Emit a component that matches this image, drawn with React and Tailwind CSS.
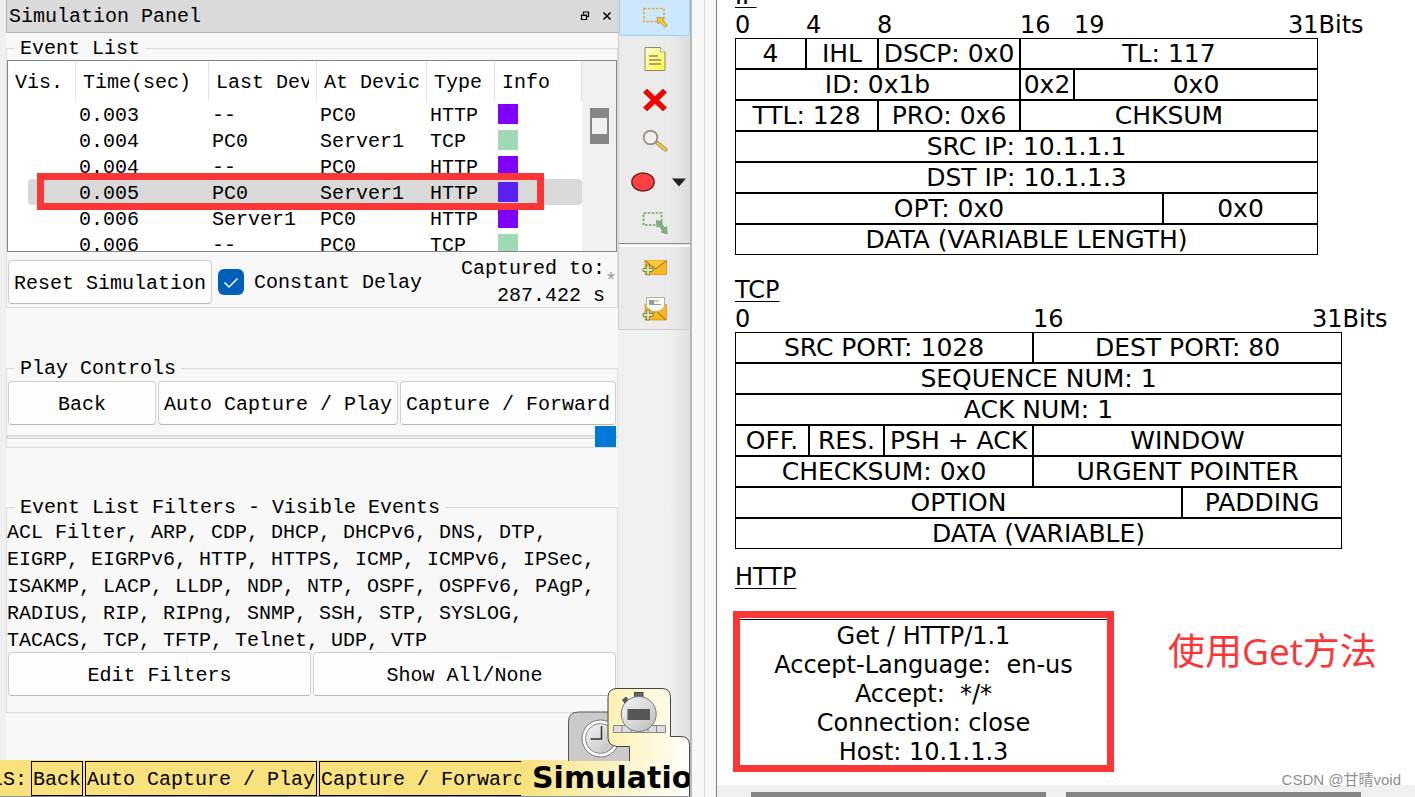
import React from "react";

const events = [
  ["0.003", "--", "PC0", "HTTP", "violet"],
  ["0.004", "PC0", "Server1", "TCP", "green"],
  ["0.004", "--", "PC0", "HTTP", "violet"],
  ["0.005", "PC0", "Server1", "HTTP", "selected"],
  ["0.006", "Server1", "PC0", "HTTP", "violet"],
  ["0.006", "--", "PC0", "TCP", "green"],
];

const swatches = {
  violet: "bg-[#8000ff]",
  green: "bg-[#a0dab5]",
  selected: "bg-[#5a22f2]",
};

const headers = ["Vis.", "Time(sec)", "Last Device", "At Device", "Type", "Info"];

function PanelButton({ className = "", children }) {
  return (
    <button
      type="button"
      className={`h-11 whitespace-nowrap rounded border border-[#cfcfcf] border-b-[#b9b9b9] bg-[#fdfdfd] pt-1 ${className}`}
    >
      {children}
    </button>
  );
}

function Group({ title, className = "", children }) {
  return (
    <fieldset className={`min-w-0 border border-[#dcdcdc] ${className}`}>
      <legend className="ml-2 h-6 px-[5px] leading-[26px]">{title}</legend>
      {children}
    </fieldset>
  );
}

function EventTable() {
  return (
    <div className="relative">
      <div className="flex h-48 overflow-hidden border border-[#828790] bg-white">
        <table className="w-[574px] shrink-0 table-fixed border-separate border-spacing-0 text-left">
          <colgroup>
            <col className="w-[68px]" />
            <col className="w-[133px]" />
            <col className="w-[108px]" />
            <col className="w-[110px]" />
            <col className="w-[68px]" />
            <col className="w-[87px]" />
          </colgroup>
          <thead>
            <tr className="h-10">
              {headers.map((h) => (
                <th key={h} className="border-r border-[#e2e2e2] px-[7px] pb-0 pt-1 font-normal">
                  <span className="block overflow-hidden whitespace-nowrap">{h}</span>
                </th>
              ))}
            </tr>
          </thead>
          <tbody>
            {events.map(([time, last, at, type, color], i) => {
              const sel = color === "selected" ? "bg-[#d9d9d9]" : "";
              return (
                <tr key={i} className="h-[26px] leading-[22px]">
                  <td className="p-0 pl-5">
                    <div className={`h-[26px] rounded-l ${sel}`} />
                  </td>
                  <td className={`pb-0 pl-[3px] pt-1 ${sel}`}>{time}</td>
                  <td className={`pb-0 pl-[3px] pt-1 ${sel}`}>{last}</td>
                  <td className={`pb-0 pl-[3px] pt-1 ${sel}`}>{at}</td>
                  <td className={`pb-0 pl-[3px] pt-1 ${sel}`}>{type}</td>
                  <td className={`rounded-r py-0 pl-[3px] ${sel}`}>
                    <div className={`size-5 ${swatches[color]}`} />
                  </td>
                </tr>
              );
            })}
          </tbody>
        </table>
        <div className="flex-1 bg-[#f0f0f0] pl-2 pt-[47px]">
          <div className="h-9 w-[19px] border-x-2 border-y-10 border-[#858585] bg-[#f0f0f0]" />
        </div>
      </div>
      <div className="absolute left-[30px] top-[113px] h-[37px] w-[507px] border-7 border-[#fc3636]" />
    </div>
  );
}

function SelectIcon() {
  return (
    <svg width="26" height="24" viewBox="0 0 26 24">
      <rect x="2" y="2.500" width="20" height="13" fill="none" stroke="#f5a32a" strokeWidth="1.600" strokeDasharray="2.600 1.400" />
      <path d="M15 11l7 1-1.500 2 5 5.200-2.600 2.200-4.900-5.100-2 1.700z" fill="#f3c62d" stroke="#a18a4a" strokeWidth=".7" />
    </svg>
  );
}

function NoteIcon() {
  return (
    <svg width="26" height="26" viewBox="0 0 26 26">
      <defs>
        <linearGradient id="note" x1="0" y1="0" x2="1" y2="1">
          <stop offset="0" stopColor="#fbfad2" />
          <stop offset="1" stopColor="#fdfb3c" />
        </linearGradient>
      </defs>
      <path d="M3 1.500h15.500L23 6v18.500H3z" fill="url(#note)" stroke="#8e8e62" />
      <path d="M18.500 1.500V6H23" fill="#fff" stroke="#a9a96f" />
      <path d="M7 10h9M7 14h12M7 18h12" stroke="#8d8f55" strokeWidth="1.300" />
    </svg>
  );
}

function DeleteIcon() {
  return (
    <svg width="26" height="26" viewBox="0 0 26 26">
      <path d="M5 2l8 7.600L21 2l3.600 3.500-7.800 7.600 7.800 7.400L21 24l-8-7.500L5 24l-3.600-3.500 7.800-7.400-7.800-7.600z" fill="#f80000" stroke="#d00000" strokeWidth=".6" />
    </svg>
  );
}

function InspectIcon() {
  return (
    <svg width="26" height="24" viewBox="0 0 26 24">
      <path d="M14 13l9.500 7.500" stroke="#96876a" strokeWidth="4" strokeLinecap="round" />
      <path d="M15.500 14.200l8 6.300" stroke="#f5c52d" strokeWidth="2.400" strokeLinecap="round" />
      <circle cx="8.500" cy="8.500" r="6.800" fill="#efefef" stroke="#a88f84" strokeWidth="1.900" />
    </svg>
  );
}

function EllipseIcon() {
  return (
    <svg width="70" height="24" viewBox="0 0 70 24">
      <ellipse cx="23" cy="12" rx="11.200" ry="9" fill="#ff4040" stroke="#6d2525" strokeWidth="1.400" />
      <path d="M52 8.500h14l-7 8z" fill="#222" />
    </svg>
  );
}

function ResizeIcon() {
  return (
    <svg width="26" height="26" viewBox="0 0 26 26">
      <rect x="1.500" y="3" width="18" height="12" fill="none" stroke="#6aa95f" strokeWidth="1.600" strokeDasharray="2.600 1.400" />
      <path d="M14.500 10.500l6 1.500-1.500 1.300 4 4.700 1.800-1.500.2 7.500-6-2 1.600-1.300-3.800-4.900-1.800 1.600z" fill="#7fb47a" stroke="#67976a" strokeWidth=".7" />
    </svg>
  );
}

function PlusMark({ y }) {
  return (
    <path
      d={`M4.500 ${y}h3v3.500h3.500v3h-3.500v3.500h-3v-3.500h-3.500v-3h3.500z`}
      fill="#dbe8a4"
      stroke="#71804f"
      strokeWidth=".9"
    />
  );
}

function SimplePduIcon() {
  return (
    <svg width="26" height="20" viewBox="0 0 26 20">
      <rect x="3" y="2.500" width="21.500" height="14" fill="#fab61c" stroke="#d49222" strokeWidth=".8" />
      <path d="M3 2.500l10.500 8.500L24.500 2.500" fill="#fcc93c" stroke="#a9833a" strokeWidth="1.200" />
      <PlusMark y={7} />
    </svg>
  );
}

function ComplexPduIcon() {
  return (
    <svg width="26" height="28" viewBox="0 0 26 28">
      <path d="M3 9.500h21.500V25H3z" fill="#fab61c" stroke="#d49222" strokeWidth=".8" />
      <path d="M24 25l-9-8.500M4 25l9-8.500" stroke="#a9833a" strokeWidth="1.200" />
      <path d="M4.500 2.500h18v9c-3 4-6 5-9 5s-6-1-9-5z" fill="#fbfaf0" stroke="#b8b29a" />
      <path d="M7.500 5.500h4v3h-4zM12 6h5M7 9.500h12" fill="#9a9a9a" stroke="#9a9a9a" strokeWidth="1.200" />
      <PlusMark y={15} />
    </svg>
  );
}

function ToolButton({ label, active, children }) {
  return (
    <button
      type="button"
      aria-label={label}
      className={
        active
          ? "flex h-9 w-full items-center justify-center rounded-b border border-t-0 border-[#99d1ff] bg-[#cce8ff]"
          : "flex h-[41px] w-full items-center justify-center"
      }
    >
      {children}
    </button>
  );
}

function ToolBar() {
  return (
    <div className="w-[72px] shrink-0 bg-linear-to-r from-[#f0f0f0] from-70% to-[#e0e0e0]">
      <div className="border-b border-l border-[#cfcfcf] bg-linear-to-r from-[#ebebeb] from-70% to-[#dcdcdc]">
        <ToolButton label="Select" active><SelectIcon /></ToolButton>
        <div className="flex flex-col pt-0.5">
          <ToolButton label="Place note"><NoteIcon /></ToolButton>
          <ToolButton label="Delete"><DeleteIcon /></ToolButton>
          <ToolButton label="Inspect"><InspectIcon /></ToolButton>
          <ToolButton label="Draw ellipse"><EllipseIcon /></ToolButton>
          <ToolButton label="Resize shape"><ResizeIcon /></ToolButton>
        </div>
        <div className="h-1 border-b-2 border-t border-b-white border-t-[#8f8f8f]" />
        <ToolButton label="Add simple PDU"><SimplePduIcon /></ToolButton>
        <ToolButton label="Add complex PDU"><ComplexPduIcon /></ToolButton>
      </div>
    </div>
  );
}

function ModeTabs() {
  return (
    <svg className="absolute bottom-[35px] right-0" width="122" height="73" viewBox="568 688 122 73">
      <defs>
        <linearGradient id="tab" gradientUnits="userSpaceOnUse" x1="600" y1="0" x2="690" y2="0">
          <stop offset="0" stopColor="#fcefac" />
          <stop offset="1" stopColor="#fffefa" />
        </linearGradient>
        <linearGradient id="dial" x1="0" y1="0" x2="1" y2="1">
          <stop offset="0" stopColor="#f6f6f6" />
          <stop offset="1" stopColor="#bcbcbc" />
        </linearGradient>
      </defs>
      <path d="M568.500 762V722q0-10 10-10H640v50z" fill="#cacaca" stroke="#555" />
      <circle cx="600.500" cy="738.500" r="18.500" fill="#fff" stroke="#777" />
      <circle cx="600.500" cy="738.500" r="15" fill="url(#dial)" stroke="#888" />
      <path d="M601.500 726v13h-11" fill="none" stroke="#333" strokeWidth="1.500" />
      <path
        d="M629.500 762V746.500H617q-9-1-9-9V697.500q0-9 9-9H662q8.500 0 8.500 9V736.500H681q8.500 0 8.500 9V762z"
        fill="url(#tab)"
        stroke="#444"
      />
      <path d="M613.500 725.500h52v7h-52zM622 725.500v7M631 725.500v7M648 725.500v7M656.500 725.500v7" fill="#ddd" stroke="#888" />
      <path d="M622 700l4-3.500 3 3.500-4 4z" fill="#555" />
      <rect x="634.500" y="692.500" width="8.500" height="5" fill="#666" stroke="#444" />
      <circle cx="638.700" cy="714" r="17.500" fill="url(#dial)" stroke="#777" />
      <rect x="627.500" y="709" width="22.500" height="11" fill="#555" />
    </svg>
  );
}

function StatusBar() {
  const box = "h-[35px] shrink-0 whitespace-nowrap border border-black px-px pt-0.5";
  return (
    <div className="relative flex h-[37px] shrink-0 border-b border-[#8a8f98] bg-[#f9e27c]">
      <div className="flex min-w-0 flex-1 gap-0.5 overflow-hidden pt-px">
        <span className="flex w-[29px] shrink-0 items-center justify-end overflow-hidden pr-0.5 pt-0.5">LS:</span>
        <button type="button" className={box}>Back</button>
        <button type="button" className={box}>Auto Capture / Play</button>
        <button type="button" className={box}>Capture / Forward</button>
      </div>
      <div className="w-[169px] shrink-0 overflow-hidden whitespace-nowrap border-r border-[#444] bg-linear-to-r from-[#f7e27a] to-[#fffefa] pl-[11px] font-['DejaVu_Sans',sans-serif] text-[30px] font-bold leading-9">
        Simulatio
      </div>
      <ModeTabs />
    </div>
  );
}

function SimulationPanel() {
  return (
    <section className="min-w-0 flex-1 border-l-6 border-[#f0f0f0] bg-[#f8f8f8]">
      <header className="flex h-[33px] items-center justify-between border-b border-l border-[#b4b4b4] bg-[#dadada] pl-0.5 pr-1.5">
        <h1 className="pt-0.5">Simulation Panel</h1>
        <div className="flex gap-3">
          <button type="button" aria-label="Float panel">
            <svg width="10" height="10" viewBox="0 0 10 10" fill="none" stroke="#000" strokeWidth="1.200">
              <path d="M3.500 3V1h5v4.500H6.500M1.500 4h5v4.500h-5zM1.500 4.500h5" />
            </svg>
          </button>
          <button type="button" aria-label="Close panel">
            <svg width="10" height="10" viewBox="0 0 10 10" stroke="#000" strokeWidth="1.500">
              <path d="M1.500 1.500l7 7M8.500 1.500l-7 7" />
            </svg>
          </button>
        </div>
      </header>

      <Group title="Event List" className="mt-[3px]">
        <EventTable />
        <div className="flex h-[55px] items-center pl-px pt-[5px]">
          <PanelButton className="w-[204px]">Reset Simulation</PanelButton>
          <label className="ml-1.5 flex items-center gap-2.5">
            <span className="grid">
              <input
                type="checkbox"
                defaultChecked
                className="col-start-1 row-start-1 size-[26px] appearance-none rounded-md bg-[#005fb8]"
              />
              <svg className="pointer-events-none col-start-1 row-start-1 size-[26px]" viewBox="0 0 26 26" fill="none" stroke="#fff" strokeWidth="1.500">
                <path d="M6.500 13.500l4.500 4.500 8.500-8.500" />
              </svg>
            </span>
            <span className="pt-0.5">Constant Delay</span>
          </label>
          <p className="ml-auto whitespace-nowrap text-right leading-[27px]">
            Captured to:
            <br />
            287.422 s
          </p>
          <span className="text-[#9a9a9a]">*</span>
        </div>
      </Group>

      <Group title="Play Controls" className="mt-12">
        <div className="flex gap-0.5 px-px pt-px">
          <PanelButton className="w-[148px]">Back</PanelButton>
          <PanelButton className="w-[240px]">Auto Capture / Play</PanelButton>
          <PanelButton className="flex-1">Capture / Forward</PanelButton>
        </div>
        <input
          type="range"
          aria-label="Play speed"
          defaultValue="100"
          className="mt-px block h-[21px] w-full appearance-none bg-transparent [&::-webkit-slider-runnable-track]:h-1 [&::-webkit-slider-runnable-track]:border [&::-webkit-slider-runnable-track]:border-[#d6d6d6] [&::-webkit-slider-runnable-track]:bg-[#e7eaea] [&::-webkit-slider-thumb]:-mt-[10px] [&::-webkit-slider-thumb]:size-[21px] [&::-webkit-slider-thumb]:appearance-none [&::-webkit-slider-thumb]:bg-[#0078d7]"
        />
      </Group>

      <Group title="Event List Filters - Visible Events" className="mt-[47px]">
        <p className="h-[133px] leading-[27px]">
          ACL Filter, ARP, CDP, DHCP, DHCPv6, DNS, DTP, EIGRP, EIGRPv6, HTTP, HTTPS, ICMP,
          ICMPv6, IPSec, ISAKMP, LACP, LLDP, NDP, NTP, OSPF, OSPFv6, PAgP, RADIUS, RIP, RIPng,
          SNMP, SSH, STP, SYSLOG, TACACS, TCP, TFTP, Telnet, UDP, VTP
        </p>
        <div className="flex gap-0.5 px-px pb-4">
          <PanelButton className="flex-1">Edit Filters</PanelButton>
          <PanelButton className="flex-1">Show All/None</PanelButton>
        </div>
      </Group>
    </section>
  );
}

const ipRows = [
  [["4", 1], ["IHL", 1], ["DSCP: 0x0", 1], ["TL: 117", 3]],
  [["ID: 0x1b", 3], ["0x2", 1], ["0x0", 2]],
  [["TTL: 128", 2], ["PRO: 0x6", 1], ["CHKSUM", 3]],
  [["SRC IP: 10.1.1.1", 6]],
  [["DST IP: 10.1.1.3", 6]],
  [["OPT: 0x0", 5], ["0x0", 1]],
  [["DATA (VARIABLE LENGTH)", 6]],
];

const tcpRows = [
  [["SRC PORT: 1028", 3], ["DEST PORT: 80", 2]],
  [["SEQUENCE NUM: 1", 5]],
  [["ACK NUM: 1", 5]],
  [["OFF.", 1], ["RES.", 1], ["PSH + ACK", 1], ["WINDOW", 2]],
  [["CHECKSUM: 0x0", 3], ["URGENT POINTER", 2]],
  [["OPTION", 4], ["PADDING", 1]],
  [["DATA (VARIABLE)", 5]],
];

function PacketTitle({ children }) {
  return <h2 className="h-[29px] leading-8 underline decoration-1 underline-offset-3">{children}</h2>;
}

function PacketTable({ title, ruler, cols, rows, width, className = "" }) {
  return (
    <section className={className}>
      <PacketTitle>{title}</PacketTitle>
      <div className="flex h-[29px] whitespace-nowrap leading-8">
        {ruler.map(([label, w]) => (
          <span key={label} className={w}>{label}</span>
        ))}
      </div>
      <table className={`table-fixed border-separate border-spacing-0 text-center text-[25px] leading-7 ${width}`}>
        <colgroup>
          {cols.map((c, i) => <col key={i} className={c} />)}
        </colgroup>
        <tbody>
          {rows.map((row, i) => (
            <tr key={i}>
              {row.map(([text, span], j) => (
                <td key={j} colSpan={span} className="whitespace-nowrap border border-black p-0 pt-px">
                  <div className="flex justify-center">{text}</div>
                </td>
              ))}
            </tr>
          ))}
        </tbody>
      </table>
    </section>
  );
}

function PduDetails() {
  return (
    <main className="relative flex min-w-0 flex-1 flex-col overflow-hidden border-l border-[#7b808a] bg-white font-[Verdana,'DejaVu_Sans',sans-serif] text-2xl leading-[29px]">
      <div className="-mt-5 min-h-0 flex-1 pl-[18px]">
        <PacketTable
          title="IP"
          width="w-[583px]"
          cols={["w-[71px]", "w-[72px]", "w-[142px]", "w-[54px]", "w-[89px]", "w-[155px]"]}
          ruler={[["0", "w-[71px]"], ["4", "w-[71px]"], ["8", "w-[143px]"], ["16", "w-[54px]"], ["19", "w-[214px]"], ["31Bits", ""]]}
          rows={ipRows}
        />
        <PacketTable
          title="TCP"
          className="mt-[19px]"
          width="w-[607px]"
          cols={["w-[74px]", "w-[75px]", "w-[149px]", "w-[149px]", "w-[160px]"]}
          ruler={[["0", "w-[298px]"], ["16", "w-[279px]"], ["31Bits", ""]]}
          rows={tcpRows}
        />
        <section className="mt-3">
          <PacketTitle>HTTP</PacketTitle>
          <div className="relative mt-[29px] w-[377px] whitespace-pre border-t border-black pt-0.5 text-center">
            <p>Get / HTTP/1.1</p>
            <p>{"Accept-Language:  en-us"}</p>
            <p>{"Accept:  */*"}</p>
            <p>Connection: close</p>
            <p>Host: 10.1.1.3</p>
            <div className="absolute -left-0.5 -top-[9px] h-[161px] w-[381px] border-7 border-[#fc3636]" />
            <p className="absolute left-[433px] top-1.5 font-['Open_Sans','Noto_Sans_CJK_SC',sans-serif] text-[37px] leading-[50px] text-[#fc3636]">
              使用Get方法
            </p>
          </div>
        </section>
      </div>
      <div className="flex h-3 shrink-0 gap-5 bg-[#f0f0f0] pl-[34px] pt-[7px]">
        <div className="w-[295px] bg-[#858585]" />
        <div className="w-[295px] bg-[#858585]" />
      </div>
      <p className="absolute bottom-[7px] right-3.5 font-['Liberation_Sans','Noto_Sans_CJK_SC',sans-serif] text-[15px] leading-5 text-[#8f8f8f]">
        CSDN @甘晴void
      </p>
    </main>
  );
}

export default function App() {
  return (
    <div className="flex h-screen overflow-hidden bg-[#f8f8f8] text-black">
      <div className="flex w-[690px] shrink-0 flex-col font-['Liberation_Mono',monospace] text-[20px] leading-6">
        <div className="flex min-h-0 flex-1">
          <SimulationPanel />
          <ToolBar />
        </div>
        <StatusBar />
      </div>
      <div className="w-0.5 shrink-0 bg-[#b8b8b8]" />
      <div className="w-3 shrink-0" />
      <div className="w-3 shrink-0 border-l border-[#dcdcdc]" />
      <PduDetails />
    </div>
  );
}
